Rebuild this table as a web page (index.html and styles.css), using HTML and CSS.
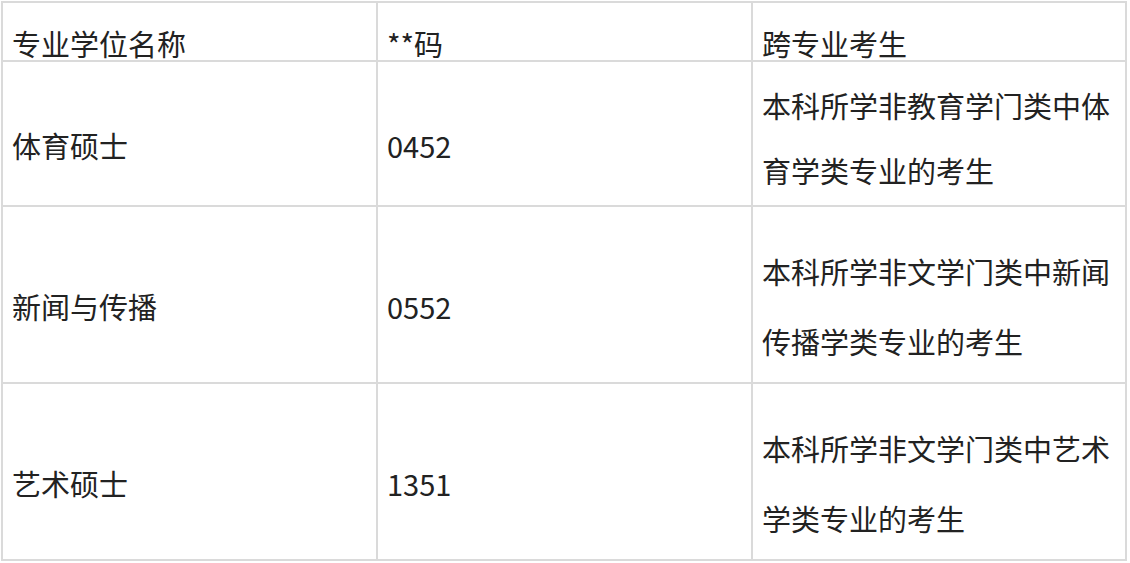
FILE: index.html
```html
<!DOCTYPE html>
<html lang="zh-CN">
<head>
<meta charset="utf-8">
<title>专业学位</title>
<link rel="stylesheet" href="styles.css">
</head>
<body>
<table class="degrees">
  <colgroup>
    <col class="c-name">
    <col class="c-code">
    <col class="c-desc">
  </colgroup>
  <tr class="head">
    <td>专业学位名称</td>
    <td>**码</td>
    <td>跨专业考生</td>
  </tr>
  <tr class="row-first">
    <td>体育硕士</td>
    <td>0452</td>
    <td class="desc">本科所学非教育学门类中体育学类专业的考生</td>
  </tr>
  <tr>
    <td>新闻与传播</td>
    <td>0552</td>
    <td class="desc">本科所学非文学门类中新闻传播学类专业的考生</td>
  </tr>
  <tr>
    <td>艺术硕士</td>
    <td>1351</td>
    <td class="desc">本科所学非文学门类中艺术学类专业的考生</td>
  </tr>
</table>
</body>
</html>
```
FILE: styles.css
```css
html, body {
  margin: 0;
  padding: 0;
  background: #ffffff;
}

.degrees {
  border-collapse: collapse;
  table-layout: fixed;
  width: 1126px;
  margin: 1px 0 0 1px;
  font-family: "Noto Sans CJK SC", "Noto Sans", sans-serif;
  font-size: 29px;
  color: #222222;
}

.c-name { width: 375px; }
.c-code { width: 375px; }
.c-desc { width: 374px; }

.degrees td {
  border: 2px solid #dadada;
  padding: 29px 8px 6px 9px;
  line-height: 70px;
  vertical-align: middle;
  text-align: left;
}

.degrees .head td {
  padding: 25px 8px 2px 9px;
  line-height: 30px;
}

.degrees .row-first td {
  line-height: 65px;
}

.degrees .row-first td.desc {
  padding: 11px 8px 2px 9px;
}
```
